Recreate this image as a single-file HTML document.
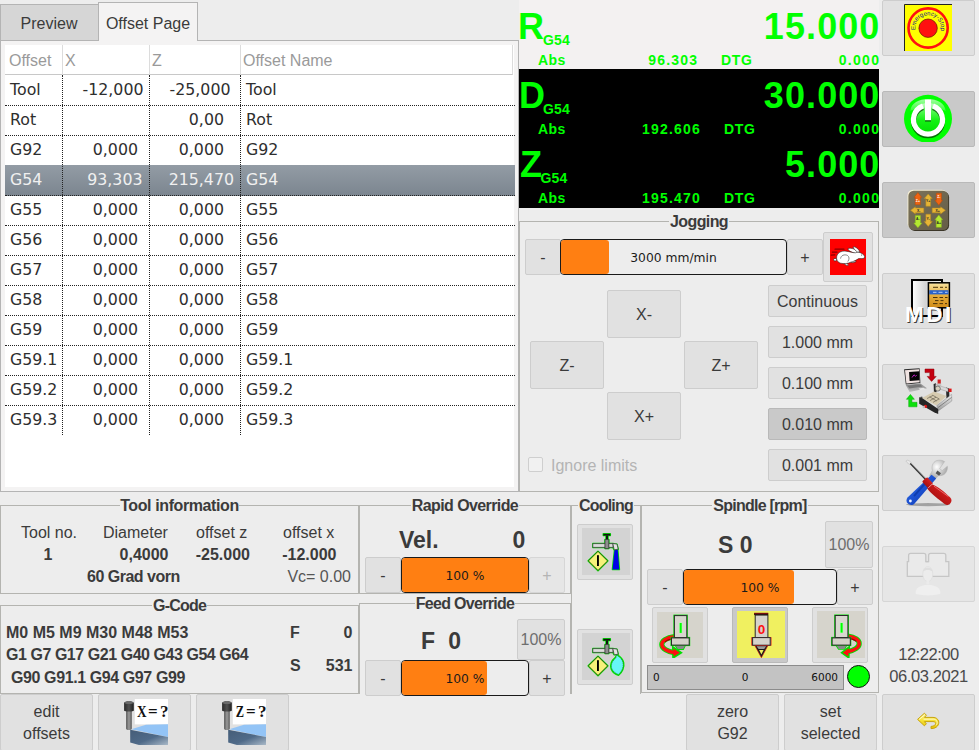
<!DOCTYPE html>
<html><head><meta charset="utf-8"><title>gmoccapy</title>
<style>
*{box-sizing:border-box;margin:0;padding:0}
html,body{width:979px;height:750px;overflow:hidden}
body{background:#ededed;font-family:"Liberation Sans",sans-serif;font-size:16px;color:#3b3b3b;position:relative}
.a{position:absolute}
.t{position:absolute;white-space:nowrap;line-height:20px;height:20px}
.c{text-align:center}.r{text-align:right}
.b{font-weight:bold}
.btn{position:absolute;background:#e1e1e1;border:1px solid #cdcdcd;border-radius:2px}
.btn.on{background:#c9c9c9;border-color:#b9b9b9}
.frame{position:absolute;border:1px solid #b4b4b0}
.lbl{position:absolute;font-weight:bold;font-size:16px;line-height:20px;height:20px;color:#3b3b3b;background:#ededed;white-space:nowrap;text-align:center}
.bt{position:absolute;left:0;right:0;text-align:center;white-space:nowrap}
.slider{position:absolute;background:#ededed;border:1px solid #1a1a1a;border-radius:4px;overflow:hidden}
.slider i{position:absolute;left:0;top:0;bottom:0;background:#ff7f12;border-radius:0 3px 3px 0}
.slider span{position:absolute;left:0;right:0;top:50%;margin-top:-8px;line-height:18px;text-align:center;font-family:"DejaVu Sans",sans-serif;font-size:12.3px;color:#1a1a1a}
.dj{font-family:"DejaVu Sans",sans-serif}
.g{color:#00ff00;font-weight:bold}
</style></head><body>
<!-- SECTION:notebook -->
<div class="a" style="left:0;top:4px;width:99px;height:37px;background:#d6d6d6;border:1px solid #b4b4b4;border-bottom:none"></div>
<div class="t c" style="left:0;top:14px;width:98px;color:#3b3b3b">Preview</div>
<div class="a" style="left:0;top:40px;width:519px;height:452px;background:#f4f3f3;border:1px solid #b4b4b4"></div>
<div class="a" style="left:98px;top:2px;width:100px;height:39px;background:#f4f3f3;border:1px solid #b4b4b4;border-bottom:none"></div>
<div class="t c" style="left:98px;top:14px;width:100px;color:#3b3b3b">Offset Page</div>
<div class="a" style="left:5px;top:45px;width:509px;height:442px;background:#fff"></div>
<div class="a" style="left:5px;top:45px;width:508px;height:30px;border-bottom:1px solid #c8c8c8;border-right:1px solid #dcdcdc"></div>
<div class="a" style="left:62px;top:45px;width:1px;height:30px;background:#dcdcdc"></div>
<div class="a" style="left:149px;top:45px;width:1px;height:30px;background:#dcdcdc"></div>
<div class="a" style="left:240px;top:45px;width:1px;height:30px;background:#dcdcdc"></div>
<div class="t" style="left:9px;top:51px;color:#9a9a9a">Offset</div>
<div class="t" style="left:65px;top:51px;color:#9a9a9a">X</div>
<div class="t" style="left:152px;top:51px;color:#9a9a9a">Z</div>
<div class="t" style="left:243px;top:51px;color:#9a9a9a">Offset Name</div>
<div class="a" style="left:5px;top:105px;width:510px;height:1px;border-top:1px dotted #222"></div>
<div class="t dj" style="left:10px;top:80px;font-size:15.8px;color:#2e2e2e">Tool</div><div class="t dj r" style="left:64px;width:79.5px;top:80px;font-size:15.8px;color:#2e2e2e">-12,000</div><div class="t dj r" style="left:151px;width:79.5px;top:80px;font-size:15.8px;color:#2e2e2e">-25,000</div><div class="t dj" style="left:246px;top:80px;font-size:15.8px;color:#2e2e2e">Tool</div>
<div class="a" style="left:5px;top:135px;width:510px;height:1px;border-top:1px dotted #222"></div>
<div class="t dj" style="left:10px;top:110px;font-size:15.8px;color:#2e2e2e">Rot</div><div class="t dj r" style="left:64px;width:74px;top:110px;font-size:15.8px;color:#2e2e2e"></div><div class="t dj r" style="left:151px;width:73px;top:110px;font-size:15.8px;color:#2e2e2e">0,00</div><div class="t dj" style="left:246px;top:110px;font-size:15.8px;color:#2e2e2e">Rot</div>
<div class="a" style="left:5px;top:165px;width:510px;height:1px;border-top:1px dotted #222"></div>
<div class="t dj" style="left:10px;top:140px;font-size:15.8px;color:#2e2e2e">G92</div><div class="t dj r" style="left:64px;width:74px;top:140px;font-size:15.8px;color:#2e2e2e">0,000</div><div class="t dj r" style="left:151px;width:73px;top:140px;font-size:15.8px;color:#2e2e2e">0,000</div><div class="t dj" style="left:246px;top:140px;font-size:15.8px;color:#2e2e2e">G92</div>
<div class="a" style="left:5px;top:165px;width:510px;height:31px;background:linear-gradient(#939ca5,#7b858f)"></div>
<div class="a" style="left:5px;top:195px;width:510px;height:1px;border-top:1px dotted #222"></div>
<div class="t dj" style="left:10px;top:170px;font-size:15.8px;color:#f0f0f0">G54</div><div class="t dj r" style="left:64px;width:78.5px;top:170px;font-size:15.8px;color:#f0f0f0">93,303</div><div class="t dj r" style="left:151px;width:83px;top:170px;font-size:15.8px;color:#f0f0f0">215,470</div><div class="t dj" style="left:246px;top:170px;font-size:15.8px;color:#f0f0f0">G54</div>
<div class="a" style="left:5px;top:225px;width:510px;height:1px;border-top:1px dotted #222"></div>
<div class="t dj" style="left:10px;top:200px;font-size:15.8px;color:#2e2e2e">G55</div><div class="t dj r" style="left:64px;width:74px;top:200px;font-size:15.8px;color:#2e2e2e">0,000</div><div class="t dj r" style="left:151px;width:73px;top:200px;font-size:15.8px;color:#2e2e2e">0,000</div><div class="t dj" style="left:246px;top:200px;font-size:15.8px;color:#2e2e2e">G55</div>
<div class="a" style="left:5px;top:255px;width:510px;height:1px;border-top:1px dotted #222"></div>
<div class="t dj" style="left:10px;top:230px;font-size:15.8px;color:#2e2e2e">G56</div><div class="t dj r" style="left:64px;width:74px;top:230px;font-size:15.8px;color:#2e2e2e">0,000</div><div class="t dj r" style="left:151px;width:73px;top:230px;font-size:15.8px;color:#2e2e2e">0,000</div><div class="t dj" style="left:246px;top:230px;font-size:15.8px;color:#2e2e2e">G56</div>
<div class="a" style="left:5px;top:285px;width:510px;height:1px;border-top:1px dotted #222"></div>
<div class="t dj" style="left:10px;top:260px;font-size:15.8px;color:#2e2e2e">G57</div><div class="t dj r" style="left:64px;width:74px;top:260px;font-size:15.8px;color:#2e2e2e">0,000</div><div class="t dj r" style="left:151px;width:73px;top:260px;font-size:15.8px;color:#2e2e2e">0,000</div><div class="t dj" style="left:246px;top:260px;font-size:15.8px;color:#2e2e2e">G57</div>
<div class="a" style="left:5px;top:315px;width:510px;height:1px;border-top:1px dotted #222"></div>
<div class="t dj" style="left:10px;top:290px;font-size:15.8px;color:#2e2e2e">G58</div><div class="t dj r" style="left:64px;width:74px;top:290px;font-size:15.8px;color:#2e2e2e">0,000</div><div class="t dj r" style="left:151px;width:73px;top:290px;font-size:15.8px;color:#2e2e2e">0,000</div><div class="t dj" style="left:246px;top:290px;font-size:15.8px;color:#2e2e2e">G58</div>
<div class="a" style="left:5px;top:345px;width:510px;height:1px;border-top:1px dotted #222"></div>
<div class="t dj" style="left:10px;top:320px;font-size:15.8px;color:#2e2e2e">G59</div><div class="t dj r" style="left:64px;width:74px;top:320px;font-size:15.8px;color:#2e2e2e">0,000</div><div class="t dj r" style="left:151px;width:73px;top:320px;font-size:15.8px;color:#2e2e2e">0,000</div><div class="t dj" style="left:246px;top:320px;font-size:15.8px;color:#2e2e2e">G59</div>
<div class="a" style="left:5px;top:375px;width:510px;height:1px;border-top:1px dotted #222"></div>
<div class="t dj" style="left:10px;top:350px;font-size:15.8px;color:#2e2e2e">G59.1</div><div class="t dj r" style="left:64px;width:74px;top:350px;font-size:15.8px;color:#2e2e2e">0,000</div><div class="t dj r" style="left:151px;width:73px;top:350px;font-size:15.8px;color:#2e2e2e">0,000</div><div class="t dj" style="left:246px;top:350px;font-size:15.8px;color:#2e2e2e">G59.1</div>
<div class="a" style="left:5px;top:405px;width:510px;height:1px;border-top:1px dotted #222"></div>
<div class="t dj" style="left:10px;top:380px;font-size:15.8px;color:#2e2e2e">G59.2</div><div class="t dj r" style="left:64px;width:74px;top:380px;font-size:15.8px;color:#2e2e2e">0,000</div><div class="t dj r" style="left:151px;width:73px;top:380px;font-size:15.8px;color:#2e2e2e">0,000</div><div class="t dj" style="left:246px;top:380px;font-size:15.8px;color:#2e2e2e">G59.2</div>
<div class="t dj" style="left:10px;top:410px;font-size:15.8px;color:#2e2e2e">G59.3</div><div class="t dj r" style="left:64px;width:74px;top:410px;font-size:15.8px;color:#2e2e2e">0,000</div><div class="t dj r" style="left:151px;width:73px;top:410px;font-size:15.8px;color:#2e2e2e">0,000</div><div class="t dj" style="left:246px;top:410px;font-size:15.8px;color:#2e2e2e">G59.3</div>
<div class="a" style="left:62px;top:75px;width:1px;height:360px;border-left:1px dotted #222"></div>
<div class="a" style="left:149px;top:75px;width:1px;height:360px;border-left:1px dotted #222"></div>
<div class="a" style="left:240px;top:75px;width:1px;height:360px;border-left:1px dotted #222"></div>

<!-- SECTION:dro -->
<div class="a" style="left:519px;top:0;width:360px;height:69px;background:#f3f1f1"></div>
<div class="a" style="left:519px;top:69px;width:360px;height:139px;background:#000"></div>
<div class="t g" style="left:518px;top:7px;font-size:36px;line-height:40px;height:40px">R</div><div class="t g" style="left:543px;top:30px;font-size:14px;letter-spacing:.2px">G54</div><div class="t g r" style="left:700px;width:180.5px;top:7px;font-size:36px;line-height:40px;height:40px;letter-spacing:1.1px">15.000</div><div class="t g" style="left:538px;top:50px;font-size:14px;letter-spacing:.4px">Abs</div><div class="t g r" style="left:600px;width:98.2px;top:50px;font-size:14px;letter-spacing:1.2px">96.303</div><div class="t g" style="left:721px;top:50px;font-size:14px;letter-spacing:.7px">DTG</div><div class="t g r" style="left:800px;width:80.3px;top:50px;font-size:14px;letter-spacing:1.3px">0.000</div>
<div class="t g" style="left:519px;top:76px;font-size:36px;line-height:40px;height:40px">D</div><div class="t g" style="left:543px;top:99px;font-size:14px;letter-spacing:.2px">G54</div><div class="t g r" style="left:700px;width:180.5px;top:76px;font-size:36px;line-height:40px;height:40px;letter-spacing:1.1px">30.000</div><div class="t g" style="left:538px;top:119px;font-size:14px;letter-spacing:.4px">Abs</div><div class="t g r" style="left:600px;width:101px;top:119px;font-size:14px;letter-spacing:1.2px">192.606</div><div class="t g" style="left:724px;top:119px;font-size:14px;letter-spacing:.7px">DTG</div><div class="t g r" style="left:800px;width:80.3px;top:119px;font-size:14px;letter-spacing:1.3px">0.000</div>
<div class="t g" style="left:520px;top:145px;font-size:36px;line-height:40px;height:40px">Z</div><div class="t g" style="left:540.5px;top:168px;font-size:14px;letter-spacing:.2px">G54</div><div class="t g r" style="left:700px;width:180.5px;top:145px;font-size:36px;line-height:40px;height:40px;letter-spacing:1.1px">5.000</div><div class="t g" style="left:538px;top:188px;font-size:14px;letter-spacing:.4px">Abs</div><div class="t g r" style="left:600px;width:101px;top:188px;font-size:14px;letter-spacing:1.2px">195.470</div><div class="t g" style="left:724px;top:188px;font-size:14px;letter-spacing:.7px">DTG</div><div class="t g r" style="left:800px;width:80.3px;top:188px;font-size:14px;letter-spacing:1.3px">0.000</div>
<!-- SECTION:jog -->
<div class="frame" style="left:519px;top:221px;width:360px;height:271px"></div>
<div class="lbl" style="left:669px;top:212px;width:60px;letter-spacing:-.6px">Jogging</div>
<div class="btn" style="left:525px;top:239px;width:36px;height:36px"><div class="bt" style="top:9px">-</div></div>
<div class="btn" style="left:787px;top:239px;width:36px;height:36px"><div class="bt" style="top:9px">+</div></div>
<div class="slider" style="left:560px;top:239px;width:227px;height:36px"><i style="width:48px"></i><span>3000 mm/min</span></div>
<div class="btn" style="left:823px;top:232px;width:50px;height:50px"></div>
<svg class="a" style="left:830px;top:239px" width="36" height="36" viewBox="0 0 36 36"><rect width="36" height="36" fill="#ff0000"/>
<g stroke="#8a0000" stroke-width="1.2" stroke-linecap="round"><path d="M5 10.2h9"/><path d="M2.4 13.2h4.6"/><path d="M1.2 16.2l3.6-.4"/></g>
<g fill="#fff" stroke="#1a1a1a" stroke-width=".55">
<path d="M28.8 13.8C27 10.6 21 8.4 18 9.6C17.4 11.2 22 13.6 25.6 14.4Z"/>
<path d="M29.8 13C29 10.2 25.4 7.4 23.2 7.8C22.8 9.2 25.6 11.6 27.6 13.2Z"/>
<path d="M20.4 23.2C22 24 24.6 23.6 25.8 22.8C26.2 22.4 25.6 21.8 24.8 22L21.6 21.4Z"/>
<path d="M14 24.4C15 25.6 17 26.8 18.2 26.4C18.8 26 18 25.2 17.2 25L16.4 23.4Z"/>
<path d="M6.6 19.6C6.2 14 11 11.6 16 12.2C19.6 12.6 22.6 13.8 25.4 13.8C27.4 12.8 30.4 13.2 32.6 15C34.6 16.2 35.2 18 34.2 19C32.8 20 30.2 19.4 28.6 19.6C26.6 21 23.6 22.6 20.6 23.2C18.6 24.6 13.6 25 10.6 24.2C8.4 23.6 6.8 22 6.6 19.6Z"/>
<ellipse cx="5.1" cy="20.7" rx="1.5" ry="1.3"/>
</g>
<path d="M10.6 19.6C10.8 16.4 14.6 15 17.4 16.4C19.4 17.6 19.6 20.2 17.8 22.6" fill="none" stroke="#555" stroke-width=".7"/>
<circle cx="31.6" cy="16" r=".5" fill="#222"/>
</svg>
<div class="btn" style="left:607px;top:290px;width:74px;height:48px"><div class="bt" style="top:15px">X-</div></div>
<div class="btn" style="left:530px;top:341px;width:74px;height:48px"><div class="bt" style="top:15px">Z-</div></div>
<div class="btn" style="left:684px;top:341px;width:74px;height:48px"><div class="bt" style="top:15px">Z+</div></div>
<div class="btn" style="left:607px;top:392px;width:74px;height:48px"><div class="bt" style="top:15px">X+</div></div>
<div class="btn" style="left:768px;top:285px;width:99px;height:32px"><div class="bt" style="top:7px">Continuous</div></div>
<div class="btn" style="left:768px;top:326px;width:99px;height:32px"><div class="bt" style="top:7px">1.000 mm</div></div>
<div class="btn" style="left:768px;top:367px;width:99px;height:32px"><div class="bt" style="top:7px">0.100 mm</div></div>
<div class="btn on" style="left:768px;top:408px;width:99px;height:32px"><div class="bt" style="top:7px">0.010 mm</div></div>
<div class="btn" style="left:768px;top:449px;width:99px;height:32px"><div class="bt" style="top:7px">0.001 mm</div></div>
<div class="a" style="left:528px;top:457px;width:15px;height:15px;border:1px solid #cfcfcf;background:#f1f1f1;border-radius:2px"></div>
<div class="t" style="left:551px;top:456px;color:#b4b4b4">Ignore limits</div>

<!-- SECTION:bottomleft -->
<div class="frame" style="left:0;top:505px;width:359px;height:89px"></div>
<div class="lbl" style="left:120px;top:496px;width:119px;letter-spacing:-.4px">Tool information</div>
<div class="t" style="left:21px;top:523px">Tool no.</div>
<div class="t" style="left:103px;top:523px">Diameter</div>
<div class="t" style="left:196px;top:523px">offset z</div>
<div class="t" style="left:283px;top:523px">offset x</div>
<div class="t b c" style="left:28px;width:40px;top:545px">1</div>
<div class="t b r" style="left:100px;width:68.5px;top:545px">0,4000</div>
<div class="t b r" style="left:180px;width:70px;top:545px">-25.000</div>
<div class="t b r" style="left:260px;width:76.5px;top:545px">-12.000</div>
<div class="t b" style="left:87px;top:567px;letter-spacing:-.5px">60 Grad vorn</div>
<div class="t r" style="left:260px;width:91px;top:567px;color:#555">Vc= 0.00</div>
<div class="frame" style="left:0;top:605px;width:359px;height:89px"></div>
<div class="lbl" style="left:152px;top:596px;width:55px;letter-spacing:-.8px">G-Code</div>
<div class="t b" style="left:6px;top:623px">M0 M5 M9 M30 M48 M53</div>
<div class="t b" style="left:6px;top:645px;letter-spacing:-.45px">G1 G7 G17 G21 G40 G43 G54 G64</div>
<div class="t b" style="left:11px;top:668px;letter-spacing:-.4px">G90 G91.1 G94 G97 G99</div>
<div class="t b" style="left:290px;top:623px">F</div>
<div class="t b r" style="left:300px;width:52.5px;top:623px">0</div>
<div class="t b" style="left:290px;top:656px">S</div>
<div class="t b r" style="left:300px;width:52.5px;top:656px">531</div>

<!-- SECTION:override -->
<div class="frame" style="left:359px;top:505px;width:212px;height:89px"></div>
<div class="lbl" style="left:411px;top:496px;width:108px;letter-spacing:-.6px">Rapid Override</div>
<div class="t b" style="left:399px;top:526px;font-size:23px;line-height:28px;height:28px">Vel.</div>
<div class="t b r" style="left:480px;width:45.3px;top:526px;font-size:23px;line-height:28px;height:28px">0</div>
<div class="btn" style="left:365px;top:557px;width:36px;height:36px"><div class="bt" style="top:9px">-</div></div>
<div class="btn" style="left:529px;top:557px;width:36px;height:36px;background:#e6e6e6;border-color:#d6d6d6"><div class="bt" style="top:9px;color:#b4b4b4">+</div></div>
<div class="slider" style="left:401px;top:557px;width:128px;height:36px"><i style="width:128px"></i><span>100 %</span></div>
<div class="frame" style="left:359px;top:603px;width:212px;height:91px;border-bottom:none"></div>
<div class="lbl" style="left:415px;top:594px;width:100px;letter-spacing:-.7px">Feed Override</div>
<div class="t b" style="left:421px;top:627px;font-size:23px;line-height:28px;height:28px">F</div>
<div class="t b r" style="left:430px;width:31px;top:627px;font-size:23px;line-height:28px;height:28px">0</div>
<div class="btn" style="left:517px;top:619px;width:48px;height:41px"><div class="bt" style="top:11px;color:#6e6e6e">100%</div></div>
<div class="btn" style="left:365px;top:660px;width:36px;height:36px"><div class="bt" style="top:9px">-</div></div>
<div class="btn" style="left:529px;top:660px;width:36px;height:36px"><div class="bt" style="top:9px">+</div></div>
<div class="slider" style="left:401px;top:660px;width:128px;height:36px"><i style="width:85px"></i><span>100 %</span></div>
<div class="frame" style="left:571px;top:505px;width:70px;height:189px;border-bottom:none"></div>
<div class="lbl" style="left:578px;top:496px;width:56px;letter-spacing:-.8px">Cooling</div>
<div class="btn" style="left:577px;top:524px;width:56px;height:56px"></div>
<div class="btn" style="left:577px;top:629px;width:56px;height:56px"></div>

<!-- SECTION:spindle -->
<div class="frame" style="left:641px;top:505px;width:238px;height:188px"></div>
<div class="lbl" style="left:712px;top:496px;width:96px;letter-spacing:-.75px">Spindle [rpm]</div>
<div class="t b" style="left:718px;top:531px;font-size:23px;line-height:28px;height:28px">S 0</div>
<div class="btn" style="left:825px;top:521px;width:48px;height:47px"><div class="bt" style="top:14px;color:#6e6e6e">100%</div></div>
<div class="btn" style="left:647px;top:569px;width:36px;height:36px"><div class="bt" style="top:9px">-</div></div>
<div class="btn" style="left:837px;top:569px;width:36px;height:36px"><div class="bt" style="top:9px">+</div></div>
<div class="slider" style="left:683px;top:569px;width:154px;height:36px"><i style="width:110px"></i><span>100 %</span></div>
<div class="btn" style="left:652px;top:607px;width:56px;height:56px"></div>
<div class="btn on" style="left:732px;top:607px;width:56px;height:56px"></div>
<div class="btn" style="left:812px;top:607px;width:56px;height:56px"></div>
<div class="a" style="left:647px;top:665px;width:197px;height:25px;background:#c3c3c3;border:1px solid #8c8c8c"></div>
<div class="t dj" style="left:653px;top:667px;font-size:10.5px;color:#111">0</div>
<div class="t dj c" style="left:725px;width:40px;top:667px;font-size:10.5px;color:#111">0</div>
<div class="t dj r" style="left:780px;width:58px;top:667px;font-size:10.5px;color:#111">6000</div>
<div class="a" style="left:847px;top:665px;width:23px;height:23px;border-radius:50%;background:#00ff00;border:1.3px solid #111"></div>

<!-- SECTION:right -->
<div class="btn" id="rb0" style="left:882px;top:0px;width:93px;height:56px"></div>
<div class="btn on" id="rb1" style="left:882px;top:91px;width:93px;height:56px"></div>
<div class="btn on" id="rb2" style="left:882px;top:182px;width:93px;height:56px"></div>
<div class="btn" id="rb3" style="left:882px;top:273px;width:93px;height:56px"></div>
<div class="btn" id="rb4" style="left:882px;top:364px;width:93px;height:56px"></div>
<div class="btn" id="rb5" style="left:882px;top:455px;width:93px;height:56px"></div>
<div class="btn" id="rb6" style="left:882px;top:546px;width:93px;height:56px;background:#e6e6e6;border-color:#d6d6d6"></div>
<div class="t c" style="left:882px;width:93px;top:644px;font-size:16.5px;letter-spacing:-.45px;color:#4a4a4a">12:22:00</div>
<div class="t c" style="left:882px;width:93px;top:666px;font-size:16.5px;letter-spacing:-.4px;color:#4a4a4a">06.03.2021</div>

<!-- SECTION:bottombar -->
<div class="btn" id="bb0" style="left:0px;top:694px;width:93px;height:57px"><div class="bt" style="top:8px">edit</div><div class="bt" style="top:30px">offsets</div></div>
<div class="btn" id="bb1" style="left:98px;top:694px;width:93px;height:57px"></div>
<div class="btn" id="bb2" style="left:196px;top:694px;width:93px;height:57px"></div>
<div class="btn" id="bb7" style="left:686px;top:694px;width:93px;height:57px"><div class="bt" style="top:8px">zero</div><div class="bt" style="top:30px">G92</div></div>
<div class="btn" id="bb8" style="left:784px;top:694px;width:93px;height:57px"><div class="bt" style="top:8px">set</div><div class="bt" style="top:30px">selected</div></div>
<div class="btn" id="bb9" style="left:882px;top:694px;width:93px;height:57px"></div>

<!-- SECTION:icons -->
<!-- estop -->
<svg class="a" style="left:904px;top:4px" width="48" height="47" viewBox="0 0 48 47">
<rect x="0" y="0" width="48" height="47" fill="#ffff00"/>
<path d="M0.5 47V0.5H48" fill="none" stroke="#222" stroke-width="1"/>
<circle cx="24.1" cy="24" r="19.6" fill="none" stroke="#ff1010" stroke-width="2.6"/>
<circle cx="24.1" cy="24.2" r="9.2" fill="#ff1010" stroke="#5a1a00" stroke-width=".7"/>
<path id="esarc" d="M11.3 26A12.9 12.9 0 1 1 36.7 26.9" fill="none"/>
<text font-family="Liberation Sans,sans-serif" font-size="6.1" fill="#15158a"><textPath href="#esarc" textLength="44.5" lengthAdjust="spacingAndGlyphs">Emergency-Stop</textPath></text>
</svg>
<!-- power -->
<svg class="a" style="left:904px;top:94px" width="48" height="48" viewBox="0 0 48 48">
<defs><linearGradient id="pg" x1="0" y1="0" x2="0" y2="1"><stop offset="0" stop-color="#8dff8d"/><stop offset=".55" stop-color="#14f014"/><stop offset="1" stop-color="#00e000"/></linearGradient>
<linearGradient id="pgl" x1="0" y1="0" x2="0" y2="1"><stop offset="0" stop-color="#fff" stop-opacity=".75"/><stop offset="1" stop-color="#fff" stop-opacity=".25"/></linearGradient></defs>
<circle cx="24" cy="24.8" r="24" fill="#00ff00"/>
<circle cx="24" cy="25" r="16" fill="url(#pg)"/>
<path d="M19 11.95A14.5 14.5 0 1 0 29 11.95" fill="none" stroke="#064d06" stroke-width="5.2" transform="translate(0,1.6)" opacity=".8"/>
<rect x="21" y="7.2" width="6" height="20.4" fill="#064d06" opacity=".8"/>
<path d="M19 11.95A14.5 14.5 0 1 0 29 11.95" fill="none" stroke="#fff" stroke-width="5.2"/>
<rect x="21" y="5.6" width="6" height="20.6" fill="#fff"/>
<path d="M6.400 17C7 1 41 1 41.600 17C36 12.500 12 12.500 6.400 17Z" fill="url(#pgl)" opacity=".85"/>
</svg>
<!-- jog -->
<svg class="a" style="left:907px;top:189px" width="43" height="43" viewBox="0 0 43 43">
<defs><linearGradient id="jg" x1="0" y1="0" x2="1" y2="1"><stop offset="0" stop-color="#7a7259"/><stop offset="1" stop-color="#655d47"/></linearGradient></defs>
<rect x="2.3" y="2.7" width="39.8" height="39.2" rx="5.5" fill="#3b3628"/>
<rect x=".5" y=".7" width="39.8" height="39.2" rx="5.5" fill="#f6efd6"/>
<rect x="1.4" y="1.7" width="39.8" height="39.2" rx="5.2" fill="url(#jg)"/>
<g stroke-width=".5" stroke-linejoin="round">
<path d="M10.9 3.6L14.8 8.4H13.4V15.8H8.2V8.4H7Z" fill="#ee6412" stroke="#b84a08"/>
<path d="M21.2 5L25.3 9.6H23.6V17.2H18.9V9.6H17.2Z" fill="#e6b535" stroke="#b88a1c"/>
<path d="M31.8 16.2L27.9 11.2H29.3V4.2H34.5V11.2H35.6Z" fill="#ee6412" stroke="#b84a08"/>
<path d="M3.6 21.3L8.4 17.8V19H16.8V23.8H8.4V25Z" fill="#e6b535" stroke="#b88a1c"/>
<path d="M38.4 21.3L33.6 17.8V19H25.2V23.8H33.6V25Z" fill="#e6b535" stroke="#b88a1c"/>
<path d="M10.9 38.8L6.8 34H8.3V26.6H13.5V34H15Z" fill="#b4e830" stroke="#86b41c"/>
<path d="M21.2 37.4L17.2 32.6H18.9V25.2H23.6V32.6H25.3Z" fill="#e6b535" stroke="#b88a1c"/>
<path d="M31.8 25.9L35.7 30.8H34.4V38.3H29.2V30.8H27.9Z" fill="#b4e830" stroke="#86b41c"/>
</g>
<g font-family="Liberation Sans,sans-serif" font-weight="bold" font-size="3.4" text-anchor="middle">
<text x="10.9" y="12.6" fill="#fff">Z+</text><text x="21.2" y="13" fill="#222">Y+</text><text x="31.8" y="9" fill="#fff">Z-</text>
<text x="11.6" y="22.6" fill="#222">X-</text><text x="30.6" y="22.6" fill="#222">X+</text>
<text x="10.9" y="31.4" fill="#222">A-</text><text x="21.2" y="31.2" fill="#222">Y-</text><text x="31.8" y="34.8" fill="#222">A+</text>
</g>
</svg>
<!-- mdi -->
<svg class="a" style="left:904px;top:276px" width="50" height="50" viewBox="0 0 50 50">
<defs><linearGradient id="md1" x1="0" y1="0" x2="1" y2="0"><stop offset="0" stop-color="#fff"/><stop offset=".45" stop-color="#d4d4d4"/><stop offset="1" stop-color="#f2f2f2"/></linearGradient>
<linearGradient id="md2" x1="0" y1="0" x2="0" y2="1"><stop offset="0" stop-color="#f7e3a2"/><stop offset=".5" stop-color="#e6ae3c"/><stop offset="1" stop-color="#d08a18"/></linearGradient></defs>
<rect x="8" y="4" width="30" height="36" fill="url(#md1)" stroke="#000" stroke-width="2"/>
<rect x="24.4" y="6.8" width="21" height="25" fill="url(#md2)" stroke="#000" stroke-width="1.5"/>
<rect x="25.2" y="14.2" width="19.4" height="4.2" fill="#2a62c8"/>
<g stroke="#4a3208" stroke-width="1"><path d="M29 11.3h5M36 11.3h3M41 11.3h2"/><path d="M29 21.5h4.5M35.5 21.5h3.5M41 21.5h2.5"/><path d="M31 24.6h3.5M36.5 24.6h3"/><path d="M29 27.6h4.5M35.5 27.6h3.5M41 27.6h2"/></g>
<g stroke="#c8dcf8" stroke-width=".9"><path d="M29 16.3h3.5M34.5 16.3h4M41 16.3h2.5"/></g>
<text x="26.4" y="47.3" text-anchor="middle" font-family="Liberation Sans,sans-serif" font-weight="bold" font-size="22.5" letter-spacing="2.6" fill="#222" opacity=".85">MDI</text>
<text x="25.4" y="46.3" text-anchor="middle" font-family="Liberation Sans,sans-serif" font-weight="bold" font-size="22.5" letter-spacing="2.6" fill="#fff">MDI</text>
</svg>
<!-- auto (laptop/cnc) : coords absolute page via viewBox -->
<svg class="a" style="left:900px;top:364px" width="56" height="54" viewBox="900 364 56 54">
<defs><linearGradient id="kb" x1="0" y1="0" x2="0" y2="1"><stop offset="0" stop-color="#8a8a8a"/><stop offset="1" stop-color="#bdbdbd"/></linearGradient>
<linearGradient id="rl" x1="0" y1="0" x2="0" y2="1"><stop offset="0" stop-color="#efefef"/><stop offset="1" stop-color="#9a9a9a"/></linearGradient></defs>
<path d="M904.1 369.3L919.6 368.2L920.4 383L905.8 384.5Z" fill="#2a2a2a"/>
<path d="M905 370.2L919 369.2L919.6 382.2L906.4 383.6Z" fill="#f1e4e2"/>
<path d="M909.1 372L919.3 371.2L919.6 380.2L909.6 381Z" fill="#050505"/>
<path d="M912 377.5L914 374.8L915.6 376.3L916.6 375.2" fill="none" stroke="#c020c0" stroke-width="1"/>
<path d="M905.8 384.9L920.4 383.4L927 388.3L909.6 391.9Z" fill="url(#kb)"/>
<path d="M907.4 385.6L919.6 384.4L922.6 386.6L909.4 388.4Z" fill="#777"/>
<path d="M918.5 388.6L923.5 387.7L925.8 389.2L920.4 390.3Z" fill="#e6e6e6"/>
<path d="M925 369h9v7.4h2.2l-4.6 5l-4.4-5h2.6v-3.8H925Z" fill="#c40010" stroke="#8a0008" stroke-width=".5"/>
<path d="M910.4 394.4l4 4.9h-2.5v3h5.1v4.5h-8.3v-7.5h-2.3Z" fill="#0de00d" stroke="#08a808" stroke-width=".5"/>
<path d="M937.6 379.5h3.2v6.5h-3.2Z" fill="#d02020"/><path d="M937.2 383.5h4v6h-4Z" fill="#c8c8c8"/>
<path d="M933.6 384L936 383.2L936.6 392L934 393.4Z" fill="#2b2b2b"/>
<path d="M946 387.4L949.2 388.6L949.4 399L946.4 398Z" fill="#2b2b2b"/>
<path d="M935.6 384.6L948 388.4L948 391.8L935.8 387.8Z" fill="#d9d9d9" stroke="#888" stroke-width=".4"/>
<circle cx="937.8" cy="388.6" r="2.5" fill="#d8d2c0" stroke="#444" stroke-width=".6"/>
<path d="M948.6 388.6h3v3.4h-3Z" fill="#e01818"/>
<path d="M922 398L934 391.4L946.6 396L936.4 405.4Z" fill="#d6cbb0"/>
<path d="M927 398.6l6-3.2M930 400.6l6-3.4M933 402.4l6-3.4M929.6 396.8l7 4.2M932.6 395.2l7 4" fill="none" stroke="#5a5444" stroke-width=".6"/>
<path d="M936.8 405.6L951.6 394.4L951.8 401L938.2 411Z" fill="url(#rl)" stroke="#777" stroke-width=".4"/>
<path d="M938 407.6L951.6 397.4" fill="none" stroke="#666" stroke-width=".7"/>
<path d="M919.2 397.2L922.4 398.2L938.2 409L938.2 413.9L934 412.3L919.2 403.8Z" fill="#262626"/>
<path d="M919.2 397.2L922.2 396.4L922.6 398.4Z" fill="#444"/>
<circle cx="925.4" cy="406.4" r="1.7" fill="#e01818"/><circle cx="923.8" cy="407" r="1.2" fill="#bbb"/>
</svg>
<!-- tools -->
<svg class="a" style="left:900px;top:455px" width="56" height="54" viewBox="900 455 56 54">
<defs><linearGradient id="tb" x1="0" y1="0" x2="1" y2="1"><stop offset="0" stop-color="#3a7ae8"/><stop offset=".5" stop-color="#1c50d0"/><stop offset="1" stop-color="#0a34a0"/></linearGradient>
<linearGradient id="tr" x1="1" y1="0" x2="0" y2="1"><stop offset="0" stop-color="#e83838"/><stop offset=".45" stop-color="#c41818"/><stop offset="1" stop-color="#8a0c0c"/></linearGradient>
<radialGradient id="ts" cx=".4" cy=".35" r=".7"><stop offset="0" stop-color="#fff"/><stop offset="1" stop-color="#9a9a9a"/></radialGradient></defs>
<ellipse cx="928" cy="504.6" rx="22" ry="1.6" fill="#000" opacity=".28"/>
<path d="M938.5 460.2C933.5 460.6 931 465.5 932.4 470.6L929.6 475.6L934.8 479.4L938.6 475.6C944 476.4 948 472 947.4 466.2L942.2 470.6L939.6 468.6L944.6 461.6C942.8 460.4 940.6 460 938.5 460.2Z" fill="url(#ts)" stroke="#b0b0b0" stroke-width=".5"/>
<path d="M937.4 470.6l3.6 2.6l-2 2.6l-3.4-2.6Z" fill="#555"/>
<path d="M931.6 474.8L936.2 478.6L914.6 503.4C912.8 505.4 909.6 505.4 907.8 503.6C906 501.8 906 499.2 907.8 497.2Z" fill="url(#tb)"/>
<path d="M914.6 495.4L924.6 484" fill="none" stroke="#0a34a0" stroke-width="2" stroke-linecap="round" opacity=".7"/>
<circle cx="910.4" cy="501" r="1.4" fill="#eef4ff"/>
<path d="M906.4 460.6C907.6 459.6 909.4 460.6 911.4 462.8L909.6 464.4C907.4 463 905.6 461.6 906.4 460.6Z" fill="#e8e8e8" stroke="#aaa" stroke-width=".4"/>
<path d="M910.4 463.4L926.6 480.4" fill="none" stroke="#333" stroke-width="1.7"/>
<path d="M911 463L927.2 480" fill="none" stroke="#ddd" stroke-width=".6"/>
<path d="M927.6 477.4L933 483.4L927.8 488L922.8 482.4C922 481.4 922.6 480.8 923.4 480.2L925.8 478Z" fill="url(#tr)"/>
<path d="M931.8 484.2C938 486.400 945 492.400 950 497.200C952 499 952 501.600 950.200 503.400C948.400 505.200 946 505.400 944.200 503.800C939 499.400 931 494 927.200 488.600Z" fill="url(#tr)"/>
<path d="M928.2 487.8L932.6 483.8" fill="none" stroke="#ffc0c0" stroke-width=".8" opacity=".8"/>
<path d="M934 486.2L948.4 496.6" fill="none" stroke="#ff9a9a" stroke-width="1" opacity=".6"/>
</svg>
<!-- user (disabled) -->
<svg class="a" style="left:900px;top:548px" width="56" height="52" viewBox="900 548 56 52">
<path d="M907.3 576.4V561.6H908.6V555.4Q908.6 553.4 910.6 553.4H923.8Q925.8 553.4 925.8 555.4V561.6H928.6V555.4Q928.6 553.4 930.6 553.4H943.8Q945.8 553.4 945.8 555.4V561.6H948.8V576.4Z" fill="#eaeaea" stroke="#c6c6c6" stroke-width="1.3"/>
<path d="M925.8 561.6H928.6" stroke="#c6c6c6" stroke-width="1.3"/>
<ellipse cx="927.8" cy="574" rx="5" ry="7.6" fill="#ececec" stroke="#dcdcdc" stroke-width=".6"/>
<path d="M922.9 571.6C923.2 566 932.4 566 932.7 571.6C930 569.4 925.4 569.4 922.9 571.6Z" fill="#dedede"/>
<path d="M926.4 581h2.8v3.4h-2.8Z" fill="#ebebeb"/>
<path d="M915.6 593.6C915 587.6 921 585 928 585C935 585 941 587.6 940.4 593.6C937.6 596 918.4 596 915.6 593.6Z" fill="#efefef"/>
</svg>
<!-- back -->
<svg class="a" style="left:914px;top:710px" width="28" height="22" viewBox="914 710 28 22">
<defs><linearGradient id="bk" x1="0" y1="0" x2="0" y2="1"><stop offset="0" stop-color="#fff7a0"/><stop offset=".5" stop-color="#f6e030"/><stop offset="1" stop-color="#e6c208"/></linearGradient></defs>
<path d="M917.6 719.4L924.4 713.2L926.4 715.2L924.4 717.4H933C941 717.4 941 728.6 931 728.6V726.4C936.8 726 936.8 721.6 933 721.6H924.4L926.4 723.8L924.4 725.8Z" fill="url(#bk)" stroke="#c8a40c" stroke-width="1" stroke-linejoin="round"/>
<path d="M919.4 719.2L924.2 715.2M924 719.2H933.4C937.4 719.4 938 723 936.4 725" fill="none" stroke="#fffbd0" stroke-width=".9" stroke-linecap="round"/>
</svg>
<!-- faucets -->
<svg class="a" style="left:582px;top:528px" width="48" height="48" viewBox="0 0 48 48">
<rect width="48" height="47" fill="#d3d3d3"/>
<g stroke="#00e000" stroke-width="1.5" stroke-linejoin="round" fill="#00e000">
<path d="M21.3 5.8h7v1.8h-7Z"/><path d="M24 7.6h2v4h-2Z"/>
<path d="M10.8 15.6h12.4v3.8H10.8Z"/><path d="M23 11.6h3.8v9H23Z"/>
<path d="M26.8 15.6h4L35 16.2L36.2 21.3L32.2 21.8L30.8 19.4h-4Z"/>
<path d="M32.5 22.1L35.8 21.7L37.4 41.6H30.4Z"/>
<path d="M16 23.2L25.8 32.9L16 42.6L6.2 32.9Z"/>
</g>
<path d="M21.3 5.8h7v1.8h-7Z" fill="#111"/><path d="M24 7.6h2v4h-2Z" fill="#111"/>
<path d="M10.8 15.6h12.4v3.8H10.8Z" fill="#dcdcdc" stroke="#333" stroke-width=".7"/>
<path d="M26.6 15.6h4.4v3.8h-4.4Z" fill="#dcdcdc" stroke="#333" stroke-width=".7"/>
<path d="M30.8 15.5L35 16.1L36.2 21.2L32.2 21.8Z" fill="#e4e4e4" stroke="#333" stroke-width=".7"/>
<path d="M23 11.5h3.8v9.1H23Z" fill="#8e8e8e" stroke="#333" stroke-width=".7"/>
<path d="M32.5 22.2L35.8 21.8L37.3 41.5H30.5Z" fill="#0000e6"/>
<path d="M16 23.4L25.6 32.9L16 42.4L6.4 32.9Z" fill="#f6f27a" stroke="#1a3a00" stroke-width=".8"/>
<rect x="15" y="27.2" width="1.9" height="10.8" fill="#000"/>
</svg>
<svg class="a" style="left:582px;top:633px" width="48" height="48" viewBox="0 0 48 48">
<rect width="48" height="47" fill="#d3d3d3"/>
<g stroke="#00e000" stroke-width="1.5" stroke-linejoin="round" fill="#00e000">
<path d="M21.3 5.8h7v1.8h-7Z"/><path d="M24 7.6h2v4h-2Z"/>
<path d="M10.8 15.6h12.4v3.8H10.8Z"/><path d="M23 11.6h3.8v9H23Z"/>
<path d="M26.8 15.6h4L35 16.2L36.2 21.3L32.2 21.8L30.8 19.4h-4Z"/>
<path d="M34.6 21.6C37 23 40.6 25 41.6 29.6C42.6 34.6 40 39.6 36.6 42.2C33.6 41.4 30.6 39.4 29.2 36C27.8 32 29.6 27.6 32.4 25.4C33.6 24.4 34.2 23 34.6 21.6Z"/>
<path d="M16 23.2L25.8 32.9L16 42.6L6.2 32.9Z"/>
</g>
<path d="M21.3 5.8h7v1.8h-7Z" fill="#111"/><path d="M24 7.6h2v4h-2Z" fill="#111"/>
<path d="M10.8 15.6h12.4v3.8H10.8Z" fill="#dcdcdc" stroke="#333" stroke-width=".7"/>
<path d="M26.6 15.6h4.4v3.8h-4.4Z" fill="#dcdcdc" stroke="#333" stroke-width=".7"/>
<path d="M30.8 15.5L35 16.1L36.2 21.2L32.2 21.8Z" fill="#e4e4e4" stroke="#333" stroke-width=".7"/>
<path d="M23 11.5h3.8v9.1H23Z" fill="#8e8e8e" stroke="#333" stroke-width=".7"/>
<path d="M34.6 22.2C37 23.6 40 25.6 40.9 29.8C41.8 34.4 39.6 38.8 36.5 41.4C33.9 40.6 31.2 38.8 29.9 35.8C28.6 32.2 30.2 28.2 32.8 26C34 25 34.4 23.6 34.6 22.2Z" fill="#66f6f6" stroke="#2a6a4a" stroke-width=".6" stroke-dasharray="1.2 .8"/>
<path d="M16 23.4L25.6 32.9L16 42.4L6.4 32.9Z" fill="#f6f27a" stroke="#1a3a00" stroke-width=".8"/>
<rect x="15" y="27.2" width="1.9" height="10.8" fill="#000"/>
</svg>
<!-- spindle icons -->
<svg class="a" style="left:657px;top:612px" width="46" height="46" viewBox="0 0 46 46">
<rect width="46" height="46" fill="#d6d4cc"/>
<g fill="none" stroke-linecap="butt">
<path d="M17.4 24.6C9.4 25.4 4.6 29 4.8 32.6C5 36.6 10.6 39.6 17.2 40.6" stroke="#00e000" stroke-width="5.2"/>
<path d="M15.8 34.9L24.4 40.8L16 46Z" fill="#00e000" stroke="#00e000" stroke-width="1.6"/>
<path d="M17.4 24.6C9.4 25.4 4.6 29 4.8 32.6C5 36.6 10.6 39.6 17.2 40.6" stroke="#ff1010" stroke-width="3.4"/>
<path d="M16.3 36.4L22.9 40.8L16.6 44.6Z" fill="#ff1010"/>
<path d="M8 30C10 28 14 27 17 26.8" stroke="#a00000" stroke-width="1.2"/>
</g>
<rect x="17.4" y="3.6" width="12.4" height="22" fill="#d8d6ce" stroke="#00e000" stroke-width="2"/>
<rect x="14.5" y="25.9" width="17.7" height="7.2" fill="#d8d6ce" stroke="#00e000" stroke-width="2"/>
<path d="M18.8 33.7H27.9L26.2 37.1H20.8Z" fill="#8a8a8a" stroke="#00e000" stroke-width="1.6"/>
<path d="M18.8 33.7H27.9L26.2 37.1H20.8Z" fill="#8a8a8a"/>
<rect x="17.4" y="3.6" width="12.4" height="22" fill="#d8d6ce" stroke="#2a2a2a" stroke-width="1"/>
<rect x="14.5" y="25.9" width="17.7" height="7.2" fill="#d4d2c8" stroke="#2a2a2a" stroke-width="1"/>
<rect x="22.1" y="10.6" width="3.2" height="10.6" fill="#b0ffb0"/><rect x="22.7" y="11" width="2" height="9.9" fill="#00ff00"/>
</svg>
<svg class="a" style="left:737px;top:611px" width="48" height="47" viewBox="0 0 48 47">
<rect width="48" height="47" fill="#f0f060"/>
<rect x="17.1" y="1.9" width="14.1" height="2.2" fill="#2a0a0a"/><rect x="17.1" y="1.9" width="14.1" height=".8" fill="#9a1010"/>
<rect x="18.2" y="4.1" width="12.7" height="22.4" fill="#d5d3cb" stroke="#2a2a2a" stroke-width="1"/>
<text x="24.6" y="22.6" text-anchor="middle" font-family="Liberation Sans,sans-serif" font-weight="bold" font-size="13.5" fill="#ff1010">0</text>
<rect x="14.8" y="26.6" width="19.2" height="7.6" fill="#d5d3cb" stroke="#e01010" stroke-width=".9"/>
<rect x="15.6" y="26.6" width="17.6" height="7.6" fill="#d5d3cb" stroke="#2a2a2a" stroke-width="1"/>
<path d="M17.9 34.7H30.8L24.4 46.7Z" fill="#1a1a1a" stroke="#d01010" stroke-width=".6"/>
<path d="M19.6 35.2H29.2L27.2 38H21.6Z" fill="#9a9a9a"/>
<path d="M22.1 38.9H26.6L24.4 43.4Z" fill="#f0f060"/>
</svg>
<svg class="a" style="left:817px;top:611px" width="48" height="47" viewBox="0 0 48 47">
<rect width="48" height="47" fill="#d6d4cc"/>
<g fill="none" stroke-linecap="butt">
<path d="M30.8 25.2C38 26 42.4 29.2 42.2 32.8C42 36.4 37 39.4 31 40.6" stroke="#00e000" stroke-width="5.2"/>
<path d="M32.2 36L24.6 41.8L31.8 46.8Z" fill="#00e000" stroke="#00e000" stroke-width="1.6"/>
<path d="M30.8 25.2C38 26 42.4 29.2 42.2 32.8C42 36.4 37 39.4 31 40.6" stroke="#ff1010" stroke-width="3.4"/>
<path d="M31.6 37.3L25.6 41.8L31.4 45.6Z" fill="#ff1010"/>
<path d="M39.4 30.4C37.4 28.6 34 27.6 31 27.4" stroke="#a00000" stroke-width="1.2"/>
</g>
<rect x="18.2" y="4.5" width="12.7" height="22" fill="#d8d6ce" stroke="#00e000" stroke-width="2"/>
<rect x="15.1" y="26.9" width="18.2" height="7.2" fill="#d8d6ce" stroke="#00e000" stroke-width="2"/>
<path d="M19.6 34.7H29.1L27.5 38H21.7Z" fill="#8a8a8a" stroke="#00e000" stroke-width="1.6"/>
<path d="M19.6 34.7H29.1L27.5 38H21.7Z" fill="#8a8a8a"/>
<rect x="18.2" y="4.5" width="12.7" height="22" fill="#d8d6ce" stroke="#2a2a2a" stroke-width="1"/>
<rect x="15.1" y="26.9" width="18.2" height="7.2" fill="#d4d2c8" stroke="#2a2a2a" stroke-width="1"/>
<rect x="23" y="11.6" width="3.2" height="10.4" fill="#b0ffb0"/><rect x="23.6" y="12" width="2" height="9.6" fill="#00ff00"/>
</svg>
<!-- touch-off -->
<svg class="a" style="left:124px;top:699px" width="46" height="47" viewBox="0 0 46 47">
<defs><linearGradient id="tfX" x1="0" y1="0" x2="1" y2="1"><stop offset="0" stop-color="#455d78"/><stop offset=".55" stop-color="#4f6a88"/><stop offset="1" stop-color="#a9b9c8"/></linearGradient>
<linearGradient id="thX" x1="0" y1="0" x2="1" y2="0"><stop offset="0" stop-color="#555"/><stop offset=".5" stop-color="#9a9a9a"/><stop offset="1" stop-color="#5a5a5a"/></linearGradient>
<linearGradient id="tkX" x1="0" y1="0" x2="1" y2="0"><stop offset="0" stop-color="#2a2a2a"/><stop offset=".5" stop-color="#505050"/><stop offset="1" stop-color="#1e1e1e"/></linearGradient></defs>
<rect x="10.8" y="0" width="33.2" height="25.4" fill="#fff"/>
<path d="M7.2 30.3L22 25.7L44 25.2V38Z" fill="#93c4f6"/>
<path d="M6.2 30.8L44 38V46H14.9L6.2 43.6Z" fill="url(#tfX)"/>
<path d="M2.1 12h5.7v17.6C7.8 31.6 2.1 31.6 2.1 29.6Z" fill="url(#thX)"/>
<path d="M.1 4C.1 1.600 9.800 1.600 9.800 4V11.400C9.800 12.800 .1 12.800 .1 11.400Z" fill="url(#tkX)"/>
<ellipse cx="4.950" cy="3.800" rx="4.200" ry="1.300" fill="#6a6a6a"/>
<text font-family="Liberation Serif,serif" font-weight="bold" font-size="17" fill="#111" text-anchor="middle"><tspan x="17.9" y="17.6" textLength="9.6" lengthAdjust="spacingAndGlyphs">X</tspan><tspan x="28.9" y="17.6">=</tspan><tspan x="40.2" y="17.6">?</tspan></text>
</svg>
<svg class="a" style="left:222px;top:699px" width="46" height="47" viewBox="0 0 46 47">
<defs><linearGradient id="tfZ" x1="0" y1="0" x2="1" y2="1"><stop offset="0" stop-color="#455d78"/><stop offset=".55" stop-color="#4f6a88"/><stop offset="1" stop-color="#a9b9c8"/></linearGradient>
<linearGradient id="thZ" x1="0" y1="0" x2="1" y2="0"><stop offset="0" stop-color="#555"/><stop offset=".5" stop-color="#9a9a9a"/><stop offset="1" stop-color="#5a5a5a"/></linearGradient>
<linearGradient id="tkZ" x1="0" y1="0" x2="1" y2="0"><stop offset="0" stop-color="#2a2a2a"/><stop offset=".5" stop-color="#505050"/><stop offset="1" stop-color="#1e1e1e"/></linearGradient></defs>
<rect x="10.8" y="0" width="33.2" height="25.4" fill="#fff"/>
<path d="M7.2 30.3L22 25.7L44 25.2V38Z" fill="#93c4f6"/>
<path d="M6.2 30.8L44 38V46H14.9L6.2 43.6Z" fill="url(#tfZ)"/>
<path d="M2.1 12h5.7v17.6C7.8 31.6 2.1 31.6 2.1 29.6Z" fill="url(#thZ)"/>
<path d="M.1 4C.1 1.600 9.800 1.600 9.800 4V11.400C9.800 12.800 .1 12.800 .1 11.400Z" fill="url(#tkZ)"/>
<ellipse cx="4.950" cy="3.800" rx="4.200" ry="1.300" fill="#6a6a6a"/>
<text font-family="Liberation Serif,serif" font-weight="bold" font-size="17" fill="#111" text-anchor="middle"><tspan x="17.9" y="17.6" textLength="8.3" lengthAdjust="spacingAndGlyphs">Z</tspan><tspan x="28.9" y="17.6">=</tspan><tspan x="40.2" y="17.6">?</tspan></text>
</svg>
<!-- ENDICONS -->
</body></html>
